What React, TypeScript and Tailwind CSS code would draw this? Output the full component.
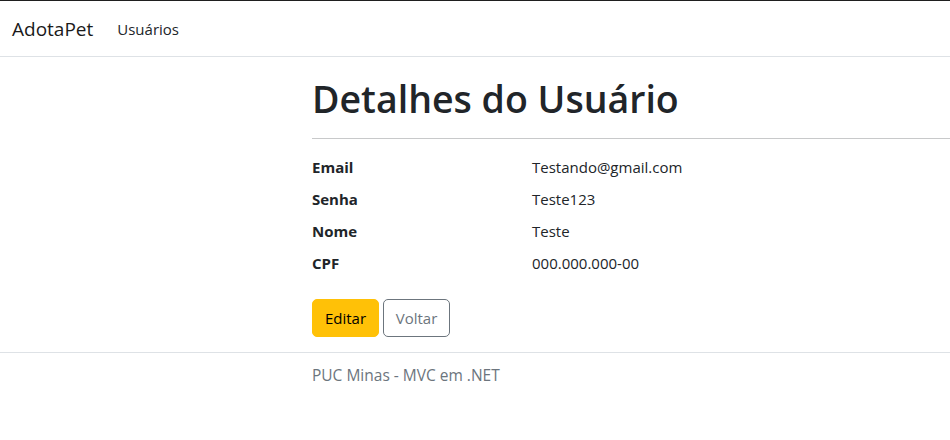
export default function App() {
  const rows = [
    { label: 'Email', value: 'Testando@gmail.com' },
    { label: 'Senha', value: 'Teste123' },
    { label: 'Nome', value: 'Teste' },
    { label: 'CPF', value: '000.000.000-00' },
  ];

  return (
    <div
      className="w-[950px] h-[440px] bg-white text-[#212529] border-t border-[#1f1f1f] overflow-hidden"
      style={{ fontFamily: '"Segoe UI", "Open Sans", sans-serif' }}
    >
      {/* navbar */}
      <nav className="h-[56px] flex items-center px-3 border-b border-[#dee2e6]">
        <span className="text-[19px] text-[#1a1a1a] mr-4 leading-[30px]">AdotaPet</span>
        <span className="text-[15px] text-[#212529] px-2 leading-6">Usuários</span>
      </nav>

      <main className="pl-[312px]">
        <h1 className="mt-[18px] text-[37.5px] leading-[48px] font-semibold text-[#212529]">
          Detalhes do Usuário
        </h1>
        <hr className="mt-[15px] border-0 border-t border-[#c8c9ca]" />

        <dl className="mt-4">
          {rows.map((r) => (
            <div key={r.label} className="flex h-6 mb-2 text-[15px] leading-6">
              <dt className="w-[220px] font-bold">{r.label}</dt>
              <dd>{r.value}</dd>
            </div>
          ))}
        </dl>

        <div className="mt-6 flex gap-1">
          <button className="h-[38px] w-[67px] rounded-[5px] bg-[#ffc107] border border-[#ffc107] text-[15px] text-black">
            Editar
          </button>
          <button className="h-[38px] w-[67px] rounded-[5px] bg-white border border-[#6c757d] text-[15px] text-[#6c757d]">
            Voltar
          </button>
        </div>
      </main>

      <footer className="mt-[15px] border-t border-[#dee2e6] pl-[312px] pt-[10px]">
        <span className="text-[15.5px] leading-6 text-[#6c757d]">PUC Minas - MVC em .NET</span>
      </footer>
    </div>
  );
}
